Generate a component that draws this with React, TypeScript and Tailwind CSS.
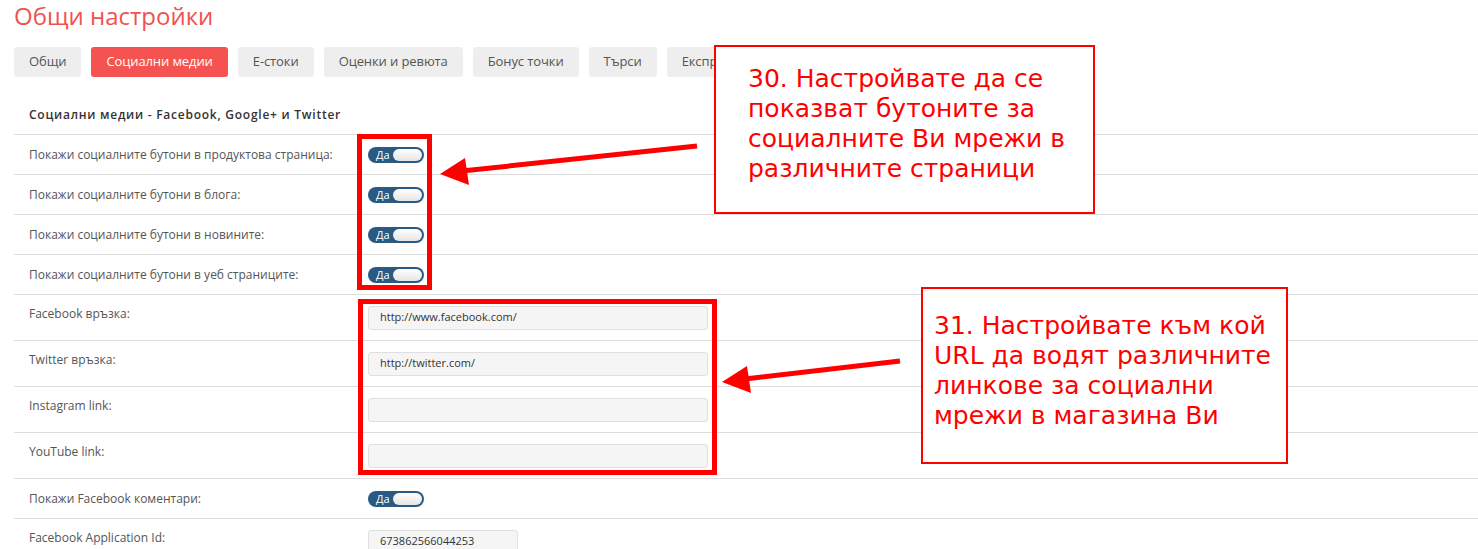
import React from "react";

const tabs = ["Общи", "Социални медии", "Е-стоки", "Оценки и ревюта", "Бонус точки", "Търси", "Експресни поръчки"];

const toggleRows = [
  "Покажи социалните бутони в продуктова страница:",
  "Покажи социалните бутони в блога:",
  "Покажи социалните бутони в новините:",
  "Покажи социалните бутони в уеб страниците:",
];

const linkRows = [
  { label: "Facebook връзка:", value: "http://www.facebook.com/" },
  { label: "Twitter връзка:", value: "http://twitter.com/" },
  { label: "Instagram link:", value: "" },
  { label: "YouTube link:", value: "" },
];

function Toggle() {
  return (
    <div className="relative w-[56px] h-[16px] rounded-full bg-[#2a5a83] flex items-center">
      <span className="pl-[8px] text-[11px] leading-[16px] text-white">Да</span>
      <span className="absolute right-[2px] top-[2px] w-[29px] h-[12px] rounded-full bg-gradient-to-b from-white to-[#e4e4e4]" />
    </div>
  );
}

function Row({ label, tall, children }: { label: string; tall?: boolean; children: React.ReactNode }) {
  // tall rows keep the label at the top, the field centred
  return (
    <div className={`flex border-t border-[#dddddd] ${tall ? "h-[46px]" : "h-[40px] items-center"}`}>
      <div className={`w-[354px] pl-[15px] text-[12px] leading-[16px] text-[#555555] ${tall ? "pt-[11px]" : ""}`}>{label}</div>
      <div className="flex-1 self-center">{children}</div>
    </div>
  );
}

export default function App() {
  return (
    <div className="relative w-[1478px] h-[549px] overflow-hidden bg-white pl-[14px] font-['Open_Sans',sans-serif]">
      <h1 className="text-[24px] leading-[32px] text-[#f0534f]">Общи настройки</h1>

      {/* tabs */}
      <div className="mt-[15px] flex gap-[10px]">
        {tabs.map((t, i) => (
          <div
            key={t}
            className={`h-[30px] px-[15px] rounded-[3px] flex items-center text-[13px] tracking-[-0.1px] whitespace-nowrap ${
              i === 1 ? "bg-[#f55351] text-white" : "bg-[#eeeeee] text-[#555555]"
            }`}
          >
            {t}
          </div>
        ))}
      </div>

      <div className="pt-[30px] pb-[11px] pl-[15px] text-[12px] leading-[16px] font-semibold tracking-[0.75px] text-[#333333]">
        Социални медии - Facebook, Google+ и Twitter
      </div>

      {toggleRows.map((l) => (
        <Row key={l} label={l}>
          <Toggle />
        </Row>
      ))}

      {linkRows.map((r) => (
        <Row key={r.label} label={r.label} tall>
          <div className="w-[340px] h-[24px] rounded-[3px] border border-[#e0e0e0] bg-[#f5f5f5] pl-[11px] flex items-center text-[11px] text-[#333333]">
            {r.value}
          </div>
        </Row>
      ))}

      <Row label="Покажи Facebook коментари:">
        <Toggle />
      </Row>

      <Row label="Facebook Application Id:" tall>
        <div className="w-[150px] h-[24px] rounded-[3px] border border-[#e0e0e0] bg-[#f5f5f5] pl-[11px] flex items-center text-[11px] text-[#333333]">
          673862566044253
        </div>
      </Row>

      {/* annotation overlays */}
      <div className="absolute left-[357px] top-[134px] w-[75px] h-[156px] border-[5px] border-[#ff0000]" />
      <div className="absolute left-[358px] top-[299px] w-[359px] h-[176px] border-[5px] border-[#ff0000]" />

      <div className="absolute left-[714px] top-[45px] w-[381px] h-[169px] border-2 border-[#ff0000] bg-white pt-[17px] pl-[32px] font-['DejaVu_Sans',sans-serif] text-[25px] leading-[30px] text-[#ff0000] whitespace-nowrap">
        30. Настройвате да се
        <br />
        показват бутоните за
        <br />
        социалните Ви мрежи в
        <br />
        различните страници
      </div>

      <div className="absolute left-[921px] top-[287px] w-[367px] h-[177px] border-2 border-[#ff0000] bg-white pt-[22px] pl-[11px] font-['DejaVu_Sans',sans-serif] text-[25px] leading-[30px] text-[#ff0000] whitespace-nowrap">
        31. Настройвате към кой
        <br />
        URL да водят различните
        <br />
        линкове за социални
        <br />
        мрежи в магазина Ви
      </div>

      <svg className="absolute inset-0 pointer-events-none" width="1478" height="549">
        <line x1="697" y1="146" x2="462" y2="171" stroke="#ff0000" strokeWidth="5" />
        <polygon points="440,174 465,158 469,185" fill="#ff0000" />
        <line x1="900" y1="361" x2="745" y2="379" stroke="#ff0000" strokeWidth="5" />
        <polygon points="722,382 747,366 751,393" fill="#ff0000" />
      </svg>
    </div>
  );
}
